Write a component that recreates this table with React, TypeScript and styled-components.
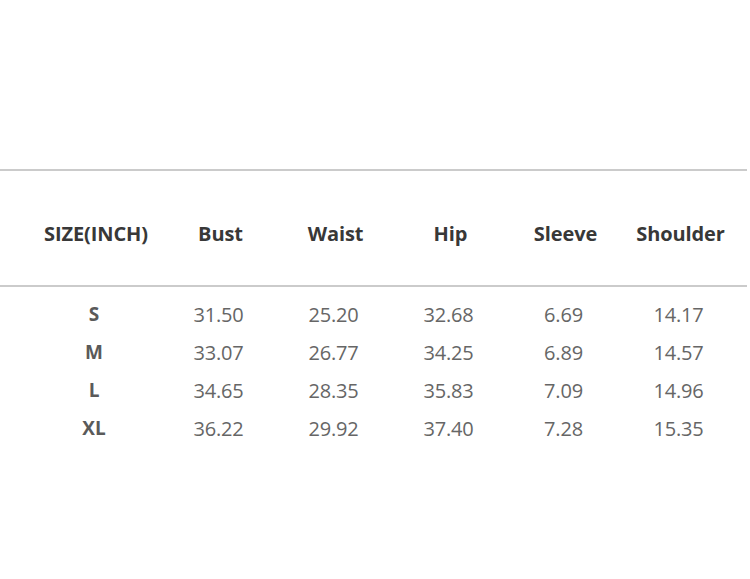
import React from "react";
import styled, { createGlobalStyle } from "styled-components";

const Global = createGlobalStyle`
  html, body { margin: 0; padding: 0; background: #ffffff; }
  body { font-family: "Open Sans", "Noto Sans", Arial, sans-serif; }
`;

const Page = styled.div`
  width: 750px;
  height: 579px;
  padding-top: 169px;
  box-sizing: border-box;
  background: #fff;
`;

const Table = styled.div`
  width: 747px;
`;

const Row = styled.div<{ $header?: boolean }>`
  display: grid;
  grid-template-columns: 134px repeat(5, 115px);
  padding-left: 27px;
  align-items: center;
  ${(p) =>
    p.$header
      ? `
    height: 118px;
    box-sizing: border-box;
    padding-top: 10px;
    border-top: 2px solid #cbcbcb;
    border-bottom: 2px solid #cbcbcb;
    margin-bottom: 8px;
  `
      : `
    height: 38px;
  `}
`;

const HeadCell = styled.div`
  text-align: center;
  font-size: 20px;
  font-weight: 700;
  color: #383838;
  letter-spacing: -0.1px;
  padding-left: 4px;
`;

const SizeCell = styled.div`
  text-align: center;
  font-size: 19px;
  font-weight: 700;
  color: #5a5a5a;
`;

const ValueCell = styled.div`
  text-align: center;
  font-size: 20px;
  font-weight: 400;
  color: #666666;
  letter-spacing: -0.2px;
`;

const headers = ["SIZE(INCH)", "Bust", "Waist", "Hip", "Sleeve", "Shoulder"];
const rows: [string, string[]][] = [
  ["S", ["31.50", "25.20", "32.68", "6.69", "14.17"]],
  ["M", ["33.07", "26.77", "34.25", "6.89", "14.57"]],
  ["L", ["34.65", "28.35", "35.83", "7.09", "14.96"]],
  ["XL", ["36.22", "29.92", "37.40", "7.28", "15.35"]],
];

export default function App() {
  return (
    <>
      <Global />
      <Page>
        <Table>
          <Row $header>
            {headers.map((h) => (
              <HeadCell key={h}>{h}</HeadCell>
            ))}
          </Row>
          {rows.map(([size, vals]) => (
            <Row key={size}>
              <SizeCell>{size}</SizeCell>
              {vals.map((v, i) => (
                <ValueCell key={i}>{v}</ValueCell>
              ))}
            </Row>
          ))}
        </Table>
      </Page>
    </>
  );
}
